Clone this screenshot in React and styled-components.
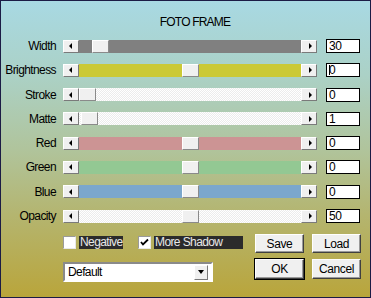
import React from "react";
import styled, { createGlobalStyle } from "styled-components";

const GlobalStyle = createGlobalStyle`
  html, body {
    margin: 0;
    padding: 0;
    overflow: hidden;
  }
  body {
    font-family: "Liberation Sans", Arial, sans-serif;
  }
`;

const sliders = [
  { label: "Width", color: "#808080", pos: 0.065, value: "30" },
  { label: "Brightness", color: "#cbc936", pos: 0.5, value: "0", caret: true },
  { label: "Stroke", color: "light", pos: 0, value: "0" },
  { label: "Matte", color: "light", pos: 0.01, value: "1" },
  { label: "Red", color: "#cc9494", pos: 0.5, value: "0" },
  { label: "Green", color: "#93c893", pos: 0.5, value: "0" },
  { label: "Blue", color: "#7ba7cc", pos: 0.5, value: "0" },
  { label: "Opacity", color: "light", pos: 0.5, value: "50" },
];

const App = () => {
  return (
    <>
      <GlobalStyle />
      <Dialog>
        <Title>FOTO FRAME</Title>
        <SliderGrid>
          {sliders.map((s) => (
            <React.Fragment key={s.label}>
              <Label>{s.label}</Label>
              <ScrollBar>
                <ArrowButton>
                  <Arrow $dir="left" />
                </ArrowButton>
                <Track $color={s.color}>
                  <Thumb $pos={s.pos} />
                </Track>
                <ArrowButton>
                  <Arrow $dir="right" />
                </ArrowButton>
              </ScrollBar>
              <ValueBox>
                {s.caret && <Caret />}
                {s.value}
              </ValueBox>
            </React.Fragment>
          ))}
        </SliderGrid>
        <Bottom>
          <LeftCol>
            <CheckRow>
              <CheckBox />
              <CheckLabel $w={44}>Negative</CheckLabel>
              <CheckBox $checked $gap={15}>
                <svg width="9" height="9" viewBox="0 0 9 9">
                  <path
                    d="M1 4 L3 6.5 L8 1.5"
                    fill="none"
                    stroke="#000"
                    strokeWidth="1.8"
                  />
                </svg>
              </CheckBox>
              <CheckLabel $w={89}>More Shadow</CheckLabel>
            </CheckRow>
            <Select>
              <SelectText>Default</SelectText>
              <DropButton>
                <DropArrow />
              </DropButton>
            </Select>
          </LeftCol>
          <ButtonGrid>
            <Button>Save</Button>
            <Button>Load</Button>
            <Button $default>OK</Button>
            <Button>Cancel</Button>
          </ButtonGrid>
        </Bottom>
      </Dialog>
    </>
  );
};

const Dialog = styled.div`
  width: 371px;
  height: 298px;
  box-sizing: border-box;
  border: 1px solid #1b1b45;
  background: linear-gradient(
    to bottom,
    #a8d9e3 0%,
    #abd1c6 25%,
    #b0c49c 50%,
    #b4b570 72%,
    #b9a53b 100%
  );
  padding-top: 14px;
  font-size: 12px;
  letter-spacing: -0.6px;
  color: #000;
`;

const Title = styled.div`
  height: 14px;
  line-height: 14px;
  text-align: center;
  padding-left: 19px;
  font-size: 12px;
  letter-spacing: -0.8px;
`;

const SliderGrid = styled.div`
  margin-top: 10px;
  display: grid;
  grid-template-columns: 55px 254px 36px;
  grid-template-rows: repeat(8, 14px);
  column-gap: 7px;
  row-gap: 10.3px;
  align-items: center;
  & > :nth-child(3n) {
    margin-left: 2px;
  }
`;

const Label = styled.div`
  text-align: right;
  white-space: nowrap;
  line-height: 14px;
`;

const ScrollBar = styled.div`
  display: flex;
  height: 13px;
`;

const ArrowButton = styled.div`
  width: 16px;
  box-sizing: border-box;
  background: #f0f0f0;
  border: 1px solid;
  border-color: #ffffff #7a7a7a #7a7a7a #ffffff;
  display: flex;
  align-items: center;
  justify-content: center;
`;

const Arrow = styled.div`
  width: 0;
  height: 0;
  border-top: 3px solid transparent;
  border-bottom: 3px solid transparent;
  ${(p) =>
    p.$dir === "left"
      ? "border-right: 3px solid #000; margin-right: 2px;"
      : "border-left: 3px solid #000; margin-left: 2px;"}
`;

const Track = styled.div`
  flex: 1;
  position: relative;
  background: ${(p) =>
    p.$color === "light"
      ? "repeating-conic-gradient(#ffffff 0 25%, #ececec 0 50%) 0 0 / 2px 2px"
      : p.$color};
`;

const Thumb = styled.div`
  position: absolute;
  top: 0;
  bottom: 0;
  width: 17px;
  box-sizing: border-box;
  left: calc(${(p) => p.$pos} * (100% - 17px));
  background: #f0f0f0;
  border: 1px solid;
  border-color: #ffffff #8a8a8a #8a8a8a #ffffff;
`;

const ValueBox = styled.div`
  height: 14px;
  box-sizing: border-box;
  background: #fff;
  border: 1px solid #000;
  font-size: 12px;
  line-height: 12px;
  padding-left: 2px;
  letter-spacing: -0.3px;
  display: flex;
  align-items: center;
`;

const Caret = styled.span`
  display: inline-block;
  width: 1px;
  height: 10px;
  background: #000;
  margin-right: -1px;
`;

const Bottom = styled.div`
  margin-top: 11px;
  display: grid;
  grid-template-columns: 150px 106px;
  column-gap: 42px;
  padding-left: 62px;
`;

const LeftCol = styled.div`
  display: flex;
  flex-direction: column;
  padding-top: 1px;
  gap: 13px;
`;

const CheckRow = styled.div`
  display: flex;
  align-items: center;
  height: 14px;
  white-space: nowrap;
`;

const CheckBox = styled.div`
  flex-shrink: 0;
  width: 13px;
  height: 13px;
  box-sizing: border-box;
  margin-left: ${(p) => p.$gap || 0}px;
  margin-right: 3px;
  background: #fff;
  border: 1px solid;
  border-color: #9a9a9a #e8e8e8 #e8e8e8 #9a9a9a;
  display: flex;
  align-items: center;
  justify-content: center;
`;

const CheckLabel = styled.div`
  width: ${(p) => p.$w}px;
  flex-shrink: 0;
  height: 13px;
  line-height: 13px;
  background: #2b2b2b;
  color: #e8e8e8;
  padding-left: 1px;
  box-sizing: border-box;
`;

const Select = styled.div`
  width: 150px;
  height: 20px;
  box-sizing: border-box;
  background: #fff;
  border: 2px solid;
  border-color: #8a8a8a #ffffff #ffffff #8a8a8a;
  display: flex;
  align-items: center;
  justify-content: space-between;
  padding-right: 3px;
`;

const SelectText = styled.span`
  padding-left: 3px;
  font-size: 12px;
`;

const DropButton = styled.div`
  width: 14px;
  height: 15px;
  box-sizing: border-box;
  background: #f0f0f0;
  border: 1px solid;
  border-color: #ffffff #7a7a7a #7a7a7a #ffffff;
  display: flex;
  align-items: center;
  justify-content: center;
`;

const DropArrow = styled.div`
  width: 0;
  height: 0;
  border-left: 3.5px solid transparent;
  border-right: 3.5px solid transparent;
  border-top: 4px solid #000;
`;

const ButtonGrid = styled.div`
  display: grid;
  grid-template-columns: 49px 49px;
  grid-template-rows: 19px 20px;
  column-gap: 8px;
  row-gap: 6px;
`;

const Button = styled.div`
  box-sizing: border-box;
  background: #f0f0f0;
  border: 1px solid;
  border-color: #ffffff #404040 #404040 #ffffff;
  box-shadow: inset -1px -1px 0 #9a9a9a;
  display: flex;
  align-items: center;
  justify-content: center;
  font-size: 12px;
  letter-spacing: -0.4px;
  outline: ${(p) => (p.$default ? "1px solid #000" : "none")};
`;

export default App;
